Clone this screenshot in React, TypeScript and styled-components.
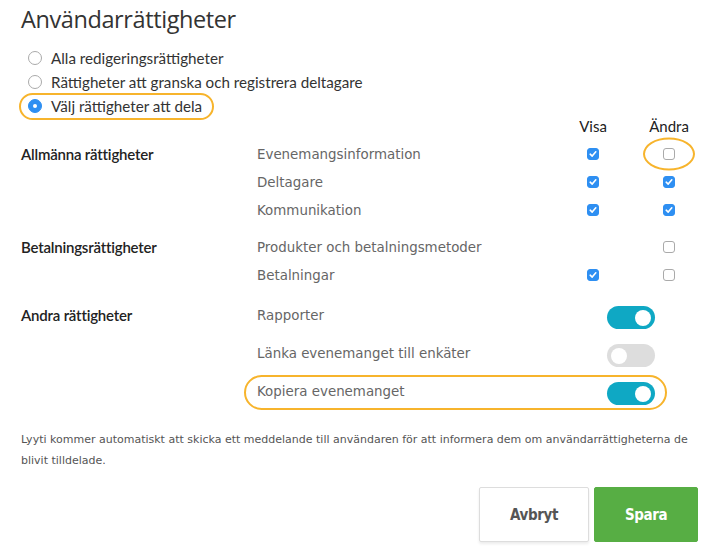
import React from 'react';
import styled, { createGlobalStyle } from 'styled-components';

const COLORS = {
  text: '#333',
  muted: '#666',
  blue: '#2e8ff2',
  teal: '#0fa8c4',
  green: '#57ae44',
  orange: '#f7b42c',
};

const GlobalStyle = createGlobalStyle`
  body {
    margin: 0;
    background: #fff;
    font-family: Lato, "Open Sans", sans-serif;
    color: ${COLORS.text};
  }
`;

type Perm = { label: string; view?: boolean; edit?: boolean; toggle?: boolean; hl?: 'edit' | 'row' };

const groups: { title: string; toggles?: boolean; gap: number; items: Perm[] }[] = [
  {
    title: 'Allmänna rättigheter',
    gap: 0,
    items: [
      { label: 'Evenemangsinformation', view: true, edit: false, hl: 'edit' },
      { label: 'Deltagare', view: true, edit: true },
      { label: 'Kommunikation', view: true, edit: true },
    ],
  },
  {
    title: 'Betalningsrättigheter',
    gap: 9,
    items: [
      { label: 'Produkter och betalningsmetoder', edit: false },
      { label: 'Betalningar', view: true, edit: false },
    ],
  },
  {
    title: 'Andra rättigheter',
    toggles: true,
    gap: 7,
    items: [
      { label: 'Rapporter', toggle: true },
      { label: 'Länka evenemanget till enkäter', toggle: false },
      { label: 'Kopiera evenemanget', toggle: true, hl: 'row' },
    ],
  },
];

const radios = [
  'Alla redigeringsrättigheter',
  'Rättigheter att granska och registrera deltagare',
  'Välj rättigheter att dela',
];

export default function App() {
  return (
    <Page>
      <GlobalStyle />
      <Title>Användarrättigheter</Title>
      <RadioList>
        {radios.map((r, i) => (
          <RadioRow key={r} $highlight={i === 2}>
            <RadioDot $checked={i === 2} />
            {r}
          </RadioRow>
        ))}
      </RadioList>

      <HeaderRow>
        <ColHead>Visa</ColHead>
        <ColHead>Ändra</ColHead>
      </HeaderRow>

      {groups.map((g) => (
        <Group key={g.title} $gap={g.gap}>
          <GroupTitle $tall={g.toggles}>{g.title}</GroupTitle>
          <div>
            {g.items.map((it) =>
              it.toggle !== undefined ? (
                <ToggleRow key={it.label} $highlight={it.hl === 'row'}>
                  <ItemLabel>{it.label}</ItemLabel>
                  <ToggleCell>
                    <Toggle $on={it.toggle}>
                      <Knob />
                    </Toggle>
                  </ToggleCell>
                </ToggleRow>
              ) : (
                <ItemRow key={it.label}>
                  <ItemLabel>{it.label}</ItemLabel>
                  <Cell>{it.view !== undefined && <Check checked={it.view} />}</Cell>
                  <Cell $ring={it.hl === 'edit'}>
                    {it.edit !== undefined && <Check checked={it.edit} />}
                  </Cell>
                </ItemRow>
              )
            )}
          </div>
        </Group>
      ))}

      <Note>
        Lyyti kommer automatiskt att skicka ett meddelande till användaren för att informera dem om
        användarrättigheterna de blivit tilldelade.
      </Note>

      <Actions>
        <Button>Avbryt</Button>
        <Button $primary>Spara</Button>
      </Actions>
    </Page>
  );
}

const Check = ({ checked }: { checked?: boolean }) => (
  <Box $checked={checked}>
    {checked && (
      <svg width="8" height="8" viewBox="0 0 8 8">
        <path d="M1.2 4.2 L3.2 6.1 L6.8 1.8" fill="none" stroke="#fff" strokeWidth="1.6" strokeLinecap="round" strokeLinejoin="round" />
      </svg>
    )}
  </Box>
);

const Page = styled.div`
  width: 716px;
  height: 559px;
  box-sizing: border-box;
  padding: 3px 9px 0 21px;
  overflow: hidden;
`;

const Title = styled.h1`
  margin: 0;
  font-family: "Open Sans", sans-serif;
  font-weight: 400;
  font-size: 23.5px;
  line-height: 32px;
  letter-spacing: -0.4px;
  color: #333;
`;

const RadioList = styled.div`
  margin-top: 11px;
  padding-left: 7px;
  display: flex;
  flex-direction: column;
  align-items: flex-start;
`;

const RadioRow = styled.div<{ $highlight?: boolean }>`
  position: relative;
  display: inline-flex;
  align-items: center;
  gap: 9px;
  height: 24px;
  font-size: 15.2px;
  color: #333;

  ${(p) =>
    p.$highlight &&
    `
    &::after {
      content: '';
      position: absolute;
      inset: -1px -12px -2px -9px;
      border: 2px solid ${COLORS.orange};
      border-radius: 14px;
    }
  `}
`;

const RadioDot = styled.span<{ $checked?: boolean }>`
  width: 14px;
  height: 14px;
  box-sizing: border-box;
  border-radius: 50%;
  flex-shrink: 0;
  border: 1px solid ${(p) => (p.$checked ? COLORS.blue : '#aaa')};
  background: ${(p) => (p.$checked ? COLORS.blue : '#fff')};
  display: flex;
  align-items: center;
  justify-content: center;

  &::after {
    content: '';
    width: 4px;
    height: 4px;
    border-radius: 50%;
    background: ${(p) => (p.$checked ? '#fff' : 'transparent')};
  }
`;

const HeaderRow = styled.div`
  display: grid;
  grid-template-columns: 76px 76px;
  justify-content: end;
  height: 22px;
  margin-top: -3px;
  margin-bottom: 3px;
`;

const ColHead = styled.div`
  text-align: center;
  font-size: 15px;
  line-height: 22px;
  color: #222;
`;

const Group = styled.div<{ $gap: number }>`
  display: grid;
  grid-template-columns: 236px 1fr;
  margin-top: ${(p) => p.$gap}px;
`;

const GroupTitle = styled.div<{ $tall?: boolean }>`
  font-size: 15px;
  font-weight: 600;
  color: #222;
  height: ${(p) => (p.$tall ? '38px' : '28px')};
  line-height: ${(p) => (p.$tall ? '38px' : '29px')};
  letter-spacing: -0.2px;
`;

const ItemRow = styled.div`
  display: grid;
  grid-template-columns: 1fr 76px 76px;
  align-items: center;
  height: 28px;
`;

const ToggleRow = styled.div<{ $highlight?: boolean }>`
  position: relative;
  display: grid;
  grid-template-columns: 1fr 152px;
  align-items: center;
  height: 38px;

  ${(p) =>
    p.$highlight &&
    `
    &::after {
      content: '';
      position: absolute;
      inset: 3px 40px 0 -13px;
      border: 2px solid ${COLORS.orange};
      border-radius: 18px;
    }
  `}
`;

const ItemLabel = styled.div`
  font-family: "DejaVu Sans", Verdana, sans-serif;
  font-size: 13.4px;
  color: ${COLORS.muted};
  white-space: nowrap;
  padding-top: 1px;
`;

const Cell = styled.div<{ $ring?: boolean }>`
  position: relative;
  display: flex;
  justify-content: center;
  align-items: center;

  ${(p) =>
    p.$ring &&
    `
    &::after {
      content: '';
      position: absolute;
      left: 50%;
      top: 50%;
      width: 52px;
      height: 33px;
      transform: translate(-50%, -50%);
      border: 2px solid ${COLORS.orange};
      border-radius: 50%;
      box-sizing: border-box;
    }
  `}
`;

const Box = styled.span<{ $checked?: boolean }>`
  width: 12px;
  height: 12px;
  box-sizing: border-box;
  border-radius: 3px;
  display: flex;
  align-items: center;
  justify-content: center;
  background: ${(p) => (p.$checked ? COLORS.blue : '#fff')};
  border: 1px solid ${(p) => (p.$checked ? COLORS.blue : '#aaa')};
`;

const ToggleCell = styled.div`
  display: flex;
  justify-content: center;
  padding-top: 5px;
`;

const Toggle = styled.span<{ $on?: boolean }>`
  width: 48px;
  height: 23px;
  border-radius: 12px;
  background: ${(p) => (p.$on ? COLORS.teal : '#ddd')};
  display: flex;
  align-items: center;
  justify-content: ${(p) => (p.$on ? 'flex-end' : 'flex-start')};
  padding: 0 4px;
  box-sizing: border-box;
`;

const Knob = styled.span`
  width: 16px;
  height: 16px;
  border-radius: 50%;
  background: #fff;
`;

const Note = styled.p`
  margin: 19px 0 0;
  font-family: "DejaVu Sans", Verdana, sans-serif;
  font-size: 11px;
  line-height: 21px;
  color: #555;
`;

const Actions = styled.div`
  display: flex;
  justify-content: flex-end;
  gap: 5px;
  margin-top: 16px;
  padding-right: 9px;
`;

const Button = styled.button<{ $primary?: boolean }>`
  height: 55px;
  width: ${(p) => (p.$primary ? '104px' : '110px')};
  border-radius: 2px;
  font-family: "Liberation Sans Narrow", "DejaVu Sans Condensed", sans-serif;
  font-stretch: condensed;
  font-weight: 700;
  font-size: 15px;
  letter-spacing: -0.4px;
  cursor: pointer;
  background: ${(p) => (p.$primary ? COLORS.green : '#fff')};
  color: ${(p) => (p.$primary ? '#fff' : '#555')};
  border: 1px solid ${(p) => (p.$primary ? COLORS.green : '#ddd')};
  box-shadow: ${(p) => (p.$primary ? 'none' : '0 2px 3px rgba(0,0,0,0.08)')};
`;
